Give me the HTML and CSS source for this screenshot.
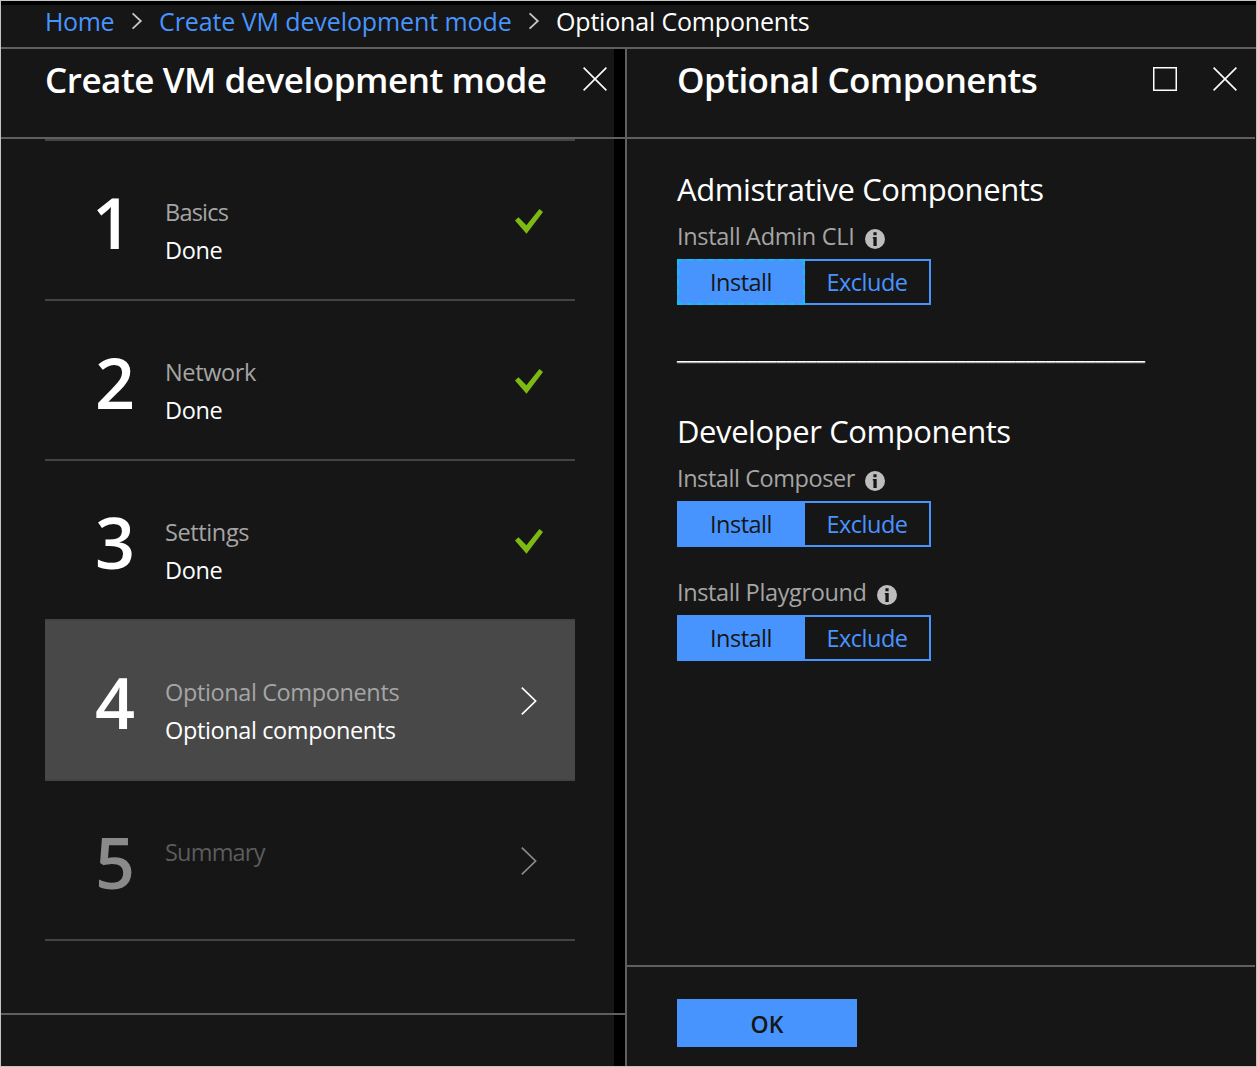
FILE: index.html
```html
<!DOCTYPE html>
<html lang="en">
<head>
<meta charset="utf-8">
<title>Optional Components</title>
<link rel="stylesheet" href="styles.css">
</head>
<body>
<svg class="sprite" aria-hidden="true">
  <symbol id="crumb-chevron" viewBox="0 0 12 18"><path d="M1.6 1.3 L9.8 9 L1.6 16.7" fill="none" stroke="currentColor" stroke-width="1.8"/></symbol>
  <symbol id="close" viewBox="0 0 24 24"><path d="M.6 .6 L23.4 23.4 M23.4 .6 L.6 23.4" fill="none" stroke="currentColor" stroke-width="1.6"/></symbol>
  <symbol id="maximize" viewBox="0 0 24 24"><rect x=".75" y=".75" width="22.5" height="22.5" fill="none" stroke="currentColor" stroke-width="1.5"/></symbol>
  <symbol id="check" viewBox="0 0 28 25"><path d="M0 11.6 L3.5 8.2 L11.4 16.2 L24.4 0 L28 3 L11.5 24.8 Z" fill="currentColor"/></symbol>
  <symbol id="chevron" viewBox="0 0 16 28"><path d="M.8 .7 L14.6 14 L.8 27.3" fill="none" stroke="currentColor" stroke-width="1.7"/></symbol>
  <symbol id="info" viewBox="0 0 20 20"><circle cx="10" cy="10" r="10" fill="#bdbdbd"/><path d="M8.4 3.2h3.2v3H8.4z M7.8 8h3.9v9H8.4V9.6h-.6z" fill="#161616"/></symbol>
</svg>
<div class="portal">
  <nav class="crumbs">
    <a class="link home">Home</a>
    <svg class="crumb-icon"><use href="#crumb-chevron"/></svg>
    <a class="link mode">Create VM development mode</a>
    <svg class="crumb-icon"><use href="#crumb-chevron"/></svg>
    <span class="current">Optional Components</span>
  </nav>
  <main class="blades">
    <section class="blade wizard">
      <header class="blade-header">
        <h1 class="title wizard-title">Create VM development mode</h1>
        <svg class="tool"><use href="#close"/></svg>
      </header>
      <ol class="steps">
        <li class="step">
          <span class="number one">1</span>
          <div class="step-text"><span class="name tight">Basics</span><span class="state">Done</span></div>
          <svg class="check"><use href="#check"/></svg>
        </li>
        <li class="step">
          <span class="number">2</span>
          <div class="step-text"><span class="name">Network</span><span class="state">Done</span></div>
          <svg class="check"><use href="#check"/></svg>
        </li>
        <li class="step">
          <span class="number">3</span>
          <div class="step-text"><span class="name">Settings</span><span class="state">Done</span></div>
          <svg class="check"><use href="#check"/></svg>
        </li>
        <li class="step active">
          <span class="number">4</span>
          <div class="step-text"><span class="name">Optional Components</span><span class="state">Optional components</span></div>
          <svg class="chevron"><use href="#chevron"/></svg>
        </li>
        <li class="step disabled">
          <span class="number">5</span>
          <div class="step-text"><span class="name tight">Summary</span></div>
          <svg class="chevron"><use href="#chevron"/></svg>
        </li>
      </ol>
      <footer class="wizard-footer"></footer>
    </section>
    <section class="blade options">
      <header class="blade-header">
        <h1 class="title options-title">Optional Components</h1>
        <div class="tools">
          <svg class="tool"><use href="#maximize"/></svg>
          <svg class="tool"><use href="#close"/></svg>
        </div>
      </header>
      <div class="form">
        <h2 class="section admin">Admistrative Components</h2>
        <div class="label cli"><span>Install Admin CLI</span><svg class="info"><use href="#info"/></svg></div>
        <div class="toggle focused"><span class="choice selected">Install</span><span class="choice">Exclude</span></div>
        <div class="divider">_______________________________________________</div>
        <h2 class="section">Developer Components</h2>
        <div class="label composer"><span>Install Composer</span><svg class="info"><use href="#info"/></svg></div>
        <div class="toggle"><span class="choice selected">Install</span><span class="choice">Exclude</span></div>
        <div class="label spaced"><span>Install Playground</span><svg class="info"><use href="#info"/></svg></div>
        <div class="toggle"><span class="choice selected">Install</span><span class="choice">Exclude</span></div>
      </div>
      <footer class="options-footer"><button class="ok">OK</button></footer>
    </section>
  </main>
</div>
</body>
</html>
```
FILE: styles.css
```css
* { box-sizing: border-box; }
body {
  margin: 0;
  background: #161616;
  color: #fff;
  font-family: "Open Sans", "Noto Sans", sans-serif;
}
h1, h2, ol { margin: 0; padding: 0; font-weight: inherit; }
.sprite { display: none; }
svg { display: block; flex: none; }

.portal {
  display: flex;
  flex-direction: column;
  width: 1257px;
  height: 1067px;
  border: 1px solid #c4c4c4;
  white-space: nowrap;
  overflow: hidden;
}

.crumbs {
  display: flex;
  align-items: center;
  height: 48px;
  flex: none;
  padding: 0 0 10px 44px;
  border-top: 4px solid #000;
  border-bottom: 2px solid #605e5e;
  font-size: 25px;
  letter-spacing: -.18px;
  line-height: 34px;
}
.link { color: #4894fe; }
.home { width: 70px; letter-spacing: -.35px; }
.mode { width: 353px; letter-spacing: -.1px; }
.crumb-icon { width: 12px; height: 18px; margin: 0 16px; color: #c8c8c8; }

.blades { display: flex; flex: 1; min-height: 0; }
.blade { display: flex; flex-direction: column; }
.wizard {
  width: 624px;
  background: linear-gradient(#000, #000) right / 11px 100% no-repeat;
}
.options { flex: 1; border-left: 2px solid #605e5e; }

.blade-header {
  display: flex;
  justify-content: space-between;
  height: 90px;
  flex: none;
  padding: 8px 18px 0 44px;
  border-bottom: 2px solid #605e5e;
}
.options .blade-header { padding: 8px 18px 0 50px; margin-right: 1px; }
.title { font-size: 35px; font-weight: 600; letter-spacing: -.45px; line-height: 46px; }
.options-title { letter-spacing: -.58px; }
.tools { display: flex; gap: 36px; }
.tool { width: 24px; height: 24px; margin-top: 10px; }

.steps {
  flex: 1;
  width: 530px;
  margin-left: 44px;
  border-top: 2px solid #434343;
  list-style: none;
}
.step {
  display: flex;
  height: 160px;
  border-bottom: 2px solid #434343;
  font-size: 23.5px;
  letter-spacing: -.38px;
}
.number {
  width: 120px;
  padding: 1px 0 0 50px;
  font-size: 70px;
  font-weight: 600;
  letter-spacing: 0;
  line-height: 160px;
}
.one { padding-left: 47px; }
.step-text {
  display: flex;
  flex-direction: column;
  flex: 1;
  padding-top: 52px;
  line-height: 38px;
}
.name { color: #a5a5a5; }
.tight { letter-spacing: -.8px; }
.check { width: 28px; height: 25px; margin: 68px 32px 0 0; color: #7fba14; }
.chevron { width: 16px; height: 28px; margin: 66px 38px 0 0; }
.active { background: #484848; }
.disabled { color: #8a8a8a; }
.disabled .name { color: #5c5c5c; }
.wizard-footer { height: 53px; flex: none; border-top: 2px solid #605e5e; }

.form { flex: 1; padding: 28px 50px 0; }
.section { font-size: 31px; letter-spacing: -.42px; line-height: 44px; }
.label {
  display: flex;
  align-items: center;
  gap: 10px;
  height: 48px;
  padding-top: 2px;
  color: #a5a5a5;
  font-size: 23.5px;
  letter-spacing: -.37px;
}
.cli { gap: 11px; letter-spacing: -.31px; }
.composer { letter-spacing: -.43px; }
.spaced { margin-top: 20px; }
.info { width: 20px; height: 20px; margin-top: 5px; }
.toggle {
  display: flex;
  width: 254px;
  height: 46px;
  border: 2px solid #4894fe;
  color: #4894fe;
  font-size: 23.5px;
  letter-spacing: -.5px;
  line-height: 42px;
  text-align: center;
}
.choice { width: 124px; }
.selected {
  width: 128px;
  margin: -2px 0 -2px -2px;
  border: 2px solid #4894fe;
  background: #4894fe;
  color: #161616;
}
.focused .selected { border: 2px dashed #12c0f0; }
.divider {
  height: 104px;
  padding-top: 24px;
  font-size: 22.74px;
  line-height: 44px;
  text-shadow: 0 1px 0 #8a8a8a;
}
.options-footer { height: 101px; flex: none; margin-right: 1px; padding: 32px 50px; border-top: 2px solid #605e5e; }
.ok {
  display: block;
  width: 180px;
  height: 48px;
  padding: 2px 0 0;
  border: 0;
  background: #4894fe;
  color: #161616;
  font: 600 23px/46px "Open Sans", "Noto Sans", sans-serif;
}
```
